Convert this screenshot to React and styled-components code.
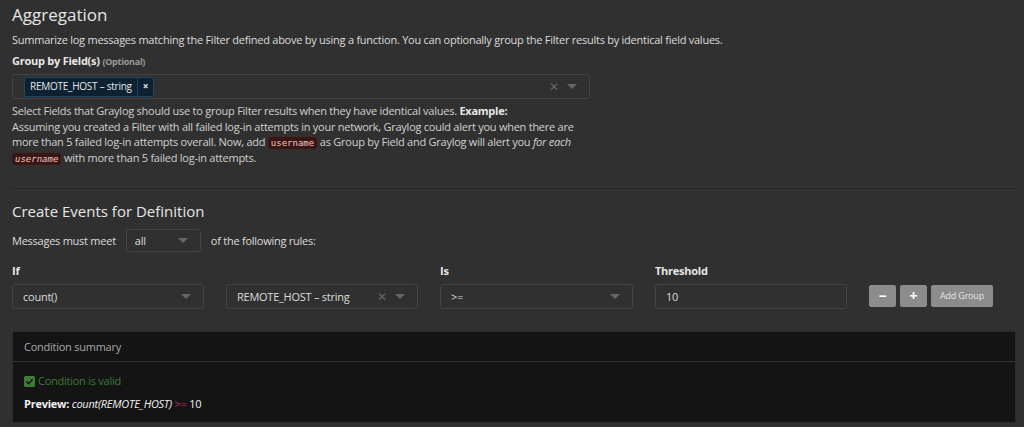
import React from 'react';
import styled, { createGlobalStyle } from 'styled-components';

const GlobalStyle = createGlobalStyle`
  html, body {
    margin: 0;
    padding: 0;
    background: #303030;
  }
  body {
    font-family: 'Open Sans', 'Noto Sans', sans-serif;
    color: #d8d8d8;
    font-size: 11px;
    letter-spacing: -0.25px;
  }
`;

const Page = styled.div`
  width: 1024px;
  height: 427px;
  overflow: hidden;
  box-sizing: border-box;
  padding: 2px 8px 0 12px;
  background: #303030;
`;

const Heading = styled.h2`
  margin: 0;
  font-weight: 400;
  font-size: ${(p) => (p.small ? '15px' : '17px')};
  letter-spacing: 0;
  color: #e6e6e6;
  line-height: 26px;
`;

const Lead = styled.p`
  margin: 0;
  font-size: 11px;
  line-height: 24px;
  color: #dcdcdc;
`;

const Label = styled.label`
  display: block;
  font-weight: 700;
  font-size: 11px;
  line-height: 18px;
  color: #e8e8e8;

  small {
    font-size: 9px;
    color: #9a9a9a;
    font-weight: 700;
  }
`;

const SelectBox = styled.div`
  box-sizing: border-box;
  display: flex;
  align-items: center;
  width: ${(p) => p.w}px;
  height: ${(p) => p.h || 25}px;
  margin-top: ${(p) => p.mt || 0}px;
  border: 1px solid #424242;
  border-radius: 3px;
  background: #303030;
  padding: 0 8px 0 ${(p) => p.pl || 10}px;
  color: #dcdcdc;
  font-size: 11px;
`;

const Value = styled.span`
  flex: 1;
  white-space: nowrap;
`;

const Chip = styled.span`
  display: inline-flex;
  align-items: stretch;
  height: 18px;
  background: #0c2233;
  border: 1px solid #1e465e;
  border-radius: 2px;
  color: #e6e6e6;
  font-size: 10px;
  line-height: 16px;

  span {
    padding: 0 5px;
  }
  b {
    border-left: 1px solid #1e465e;
    padding: 0 5px;
    font-size: 10px;
  }
`;

const Clear = styled.span`
  color: #666;
  font-size: 12px;
  margin-right: 8px;
`;

const Caret = styled.span`
  width: 0;
  height: 0;
  border-left: 5px solid transparent;
  border-right: 5px solid transparent;
  border-top: 5px solid #666;
  margin-right: 4px;
`;

const Help = styled.p`
  margin: 4px 0 0;
  width: 580px;
  font-size: 11px;
  line-height: 15.5px;
  color: #d0d0d0;

  b {
    color: #e8e8e8;
  }
`;

const Code = styled.code`
  display: inline-block;
  font-family: 'DejaVu Sans Mono', monospace;
  font-size: 9px;
  letter-spacing: 0;
  line-height: 12px;
  background: #3b1414;
  color: #f0c8c8;
  padding: 0 3px;
  border-radius: 3px;
  font-style: ${(p) => (p.italic ? 'italic' : 'normal')};
`;

const Divider = styled.hr`
  border: 0;
  border-top: 1px solid #272727;
  margin: 23px 0 9px -2px;
`;

const MeetRow = styled.div`
  display: flex;
  align-items: center;
  gap: 10px;
  margin-top: 5px;
  font-size: 11px;
  color: #dcdcdc;
`;

const RuleGrid = styled.div`
  display: grid;
  grid-template-columns: 192px 192px 193px 192px auto;
  column-gap: 22px;
  margin-top: 10px;
  align-items: end;
`;

const Field = styled.div`
  display: flex;
  flex-direction: column;
  gap: 4px;
`;

const Buttons = styled.div`
  display: flex;
  gap: 4px;
  padding-bottom: 2px;
`;

const Btn = styled.button`
  height: 22px;
  min-width: ${(p) => (p.wide ? 62 : 27)}px;
  border: 0;
  border-radius: 2px;
  background: #8c8c8c;
  color: ${(p) => (p.wide ? '#e4e4e4' : '#fff')};
  font-family: 'Open Sans', sans-serif;
  font-size: ${(p) => (p.wide ? '9px' : '14px')};
  font-weight: ${(p) => (p.wide ? 400 : 700)};
  letter-spacing: -0.2px;
  padding: 0 6px;
  line-height: 22px;
`;

const Summary = styled.div`
  margin-top: 22px;
  width: 1004px;
  background: #141414;
  border: 1px solid #2b2b2b;
  box-sizing: border-box;
`;

const SummaryHead = styled.div`
  height: 29px;
  line-height: 29px;
  padding: 0 11px;
  color: #a8a8a8;
  font-size: 11px;
  border-bottom: 1px solid #333;
`;

const SummaryBody = styled.div`
  padding: 10px 11px 9px;
  font-size: 11px;
`;

const Valid = styled.div`
  display: flex;
  align-items: center;
  gap: 3px;
  color: #3e7a3a;
  line-height: 18px;
`;

const Preview = styled.div`
  margin-top: 5px;
  color: #f2f2f2;
  line-height: 18px;

  b { font-weight: 700; }
  i { font-style: italic; }
  em { color: #c2286a; font-style: normal; }
`;

function Check() {
  return (
    <svg width="11" height="11" viewBox="0 0 11 11">
      <rect width="11" height="11" rx="1.5" fill="#3e7a3a" />
      <path d="M2.5 5.6 L4.6 7.7 L8.6 3.3" stroke="#141414" strokeWidth="1.6" fill="none" />
    </svg>
  );
}

export default function App() {
  return (
    <Page>
      <GlobalStyle />
      <Heading>Aggregation</Heading>
      <Lead>
        Summarize log messages matching the Filter defined above by using a function. You can optionally group the Filter results by identical field values.
      </Lead>
      <Label>
        Group by Field(s) <small>(Optional)</small>
      </Label>
      <SelectBox w={578} mt={3} pl={11}>
        <Value>
          <Chip>
            <span>REMOTE_HOST – string</span>
            <b>×</b>
          </Chip>
        </Value>
        <Clear>✕</Clear>
        <Caret />
      </SelectBox>
      <Help>
        Select Fields that Graylog should use to group Filter results when they have identical values. <b>Example:</b>
        <br />
        Assuming you created a Filter with all failed log-in attempts in your network, Graylog could alert you when there are more than 5 failed log-in attempts overall. Now, add <Code>username</Code> as Group by Field and Graylog will alert you <i>for each <Code italic>username</Code></i> with more than 5 failed log-in attempts.
      </Help>
      <Divider />
      <Heading small>Create Events for Definition</Heading>
      <MeetRow>
        <span>Messages must meet</span>
        <SelectBox w={75} h={23} pl={8}>
          <Value>all</Value>
          <Caret />
        </SelectBox>
        <span>of the following rules:</span>
      </MeetRow>
      <RuleGrid>
        <Field>
          <Label>If</Label>
          <SelectBox w={192}>
            <Value>count()</Value>
            <Caret />
          </SelectBox>
        </Field>
        <Field>
          <SelectBox w={192}>
            <Value>REMOTE_HOST – string</Value>
            <Clear>✕</Clear>
            <Caret />
          </SelectBox>
        </Field>
        <Field>
          <Label>Is</Label>
          <SelectBox w={193}>
            <Value>&gt;=</Value>
            <Caret />
          </SelectBox>
        </Field>
        <Field>
          <Label>Threshold</Label>
          <SelectBox w={192}>
            <Value>10</Value>
          </SelectBox>
        </Field>
        <Buttons>
          <Btn>−</Btn>
          <Btn>+</Btn>
          <Btn wide>Add Group</Btn>
        </Buttons>
      </RuleGrid>
      <Summary>
        <SummaryHead>Condition summary</SummaryHead>
        <SummaryBody>
          <Valid>
            <Check />
            Condition is valid
          </Valid>
          <Preview>
            <b>Preview:</b> <i>count(REMOTE_HOST)</i> <em>&gt;=</em> 10
          </Preview>
        </SummaryBody>
      </Summary>
    </Page>
  );
}
